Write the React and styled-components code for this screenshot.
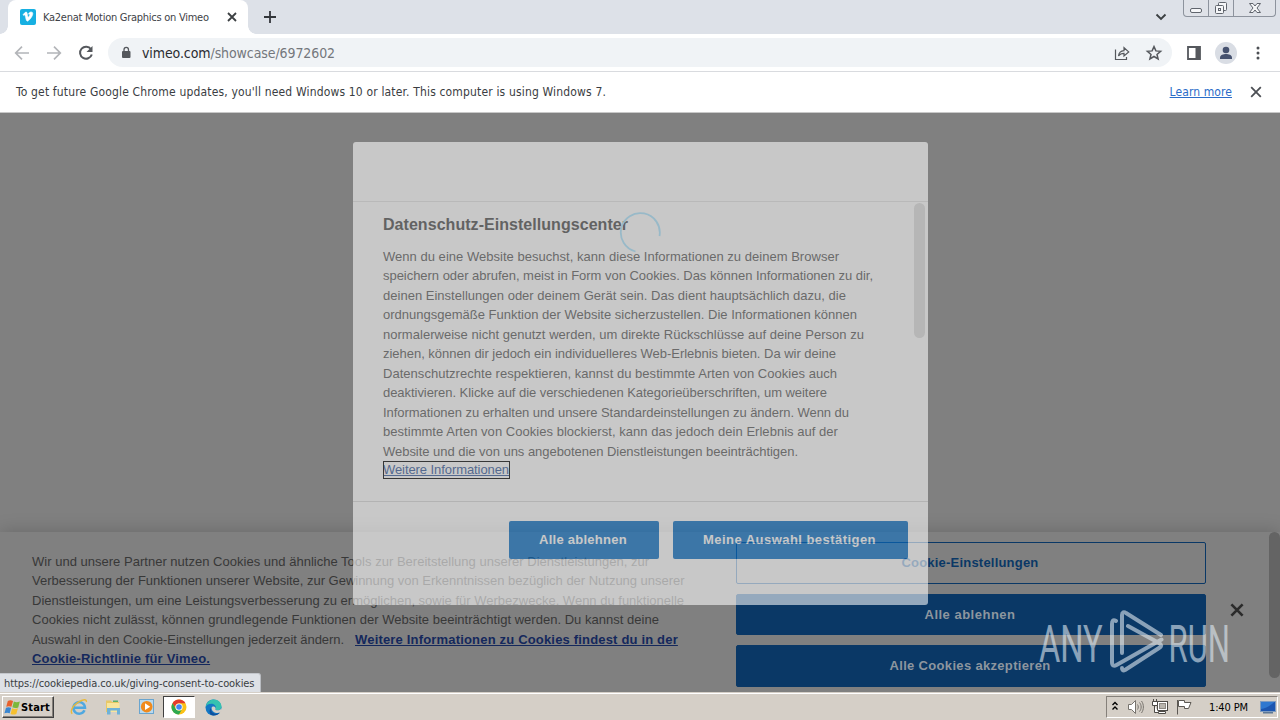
import React from 'react';
import styled, { createGlobalStyle } from 'styled-components';

const ui = '"DejaVu Sans Condensed", "DejaVu Sans", sans-serif';
const arial = '"Liberation Sans", Arial, sans-serif';

const GlobalStyle = createGlobalStyle`
  * { box-sizing: border-box; }
  body { margin: 0; overflow: hidden; background: #fff; font-family: ${ui}; }
  button { font: inherit; cursor: pointer; }
`;

const Screen = styled.div`
  position: relative;
  width: 1280px;
  height: 720px;
  display: flex;
  flex-direction: column;
  overflow: hidden;
`;

/* ---------- browser chrome ---------- */
const TabStrip = styled.header`
  height: 34px;
  flex: none;
  display: flex;
  align-items: flex-start;
  padding-left: 8px;
  background: #dde1e8;
`;

const Tab = styled.div`
  position: relative;
  width: 240px;
  height: 34px;
  display: flex;
  align-items: center;
  padding: 0 11px 0 12px;
  border-radius: 8px 8px 0 0;
  background: #fff;

  &::before,
  &::after {
    content: '';
    position: absolute;
    bottom: 0;
    width: 8px;
    height: 8px;
  }
  &::before {
    left: -8px;
    background: radial-gradient(circle at 0 0, transparent 7.5px, #fff 8px);
  }
  &::after {
    right: -8px;
    background: radial-gradient(circle at 100% 0, transparent 7.5px, #fff 8px);
  }
`;

const TabTitle = styled.span`
  flex: 1;
  margin-left: 7px;
  font-size: 11px;
  letter-spacing: -0.265px;
  white-space: nowrap;
  color: #3e4247;
`;

const NewTab = styled.div`
  margin: 9px 0 0 14px;
  height: 16px;
`;

const TabSearch = styled.div`
  margin: 9px 14px 0 auto;
  height: 16px;
`;

const WindowControls = styled.div`
  display: flex;
  height: 17px;
  width: 93px;
  margin-right: 4px;
  border: 1px solid #8d939d;
  border-top: 0;
  border-radius: 0 0 4px 4px;
  background: #dfe2e8;
`;

const WindowButton = styled.div`
  width: ${(p) => p.$w}px;
  display: flex;
  justify-content: center;
  border-right: ${(p) => (p.$last ? 0 : '1px solid #8d939d')};
`;

const Toolbar = styled.div`
  height: 38px;
  flex: none;
  display: flex;
  align-items: center;
  padding: 0 13px 0 13px;
  border-bottom: 1px solid #d9dbdf;
  background: #fff;
`;

const NavIcons = styled.div`
  display: flex;
  gap: 14px;
  width: 95px;
`;

const Omnibox = styled.div`
  width: 1064px;
  height: 29px;
  display: flex;
  align-items: center;
  padding: 0 9px 0 12px;
  border-radius: 15px;
  background: #f0f3f6;
`;

const Url = styled.span`
  flex: 1;
  margin-left: 10px;
  font-size: 14px;
  letter-spacing: -0.093px;
  color: #74777c;
  b { font-weight: 400; color: #2a2c30; }
`;

const OmniActions = styled.div`
  display: flex;
  gap: 14px;
`;

const ToolbarActions = styled.div`
  flex: 1;
  display: flex;
  align-items: center;
  justify-content: space-between;
  padding-left: 13px;
`;

const InfoBar = styled.div`
  height: 41px;
  flex: none;
  display: flex;
  align-items: center;
  padding: 0 18px 0 16px;
  border-bottom: 1px solid #c8c8c8;
  font-size: 12px;
  color: #3a3d42;
  background: #fff;
`;

const InfoText = styled.span`
  flex: 1;
  letter-spacing: 0.16px;
`;

const InfoLink = styled.a`
  margin-right: 18px;
  letter-spacing: 0.09px;
  color: #2a6cc8;
  text-decoration: underline;
`;

/* ---------- page ---------- */
const Page = styled.main`
  position: relative;
  flex: 1;
  overflow: hidden;
  background: #808080;
  font-family: ${arial};
`;

const Banner = styled.section`
  position: absolute;
  left: 0;
  right: 0;
  bottom: 0;
  height: 160px;
  display: flex;
  padding-left: 32px;
  background: #808080;
  box-shadow: 0 0 18px rgba(0, 0, 0, 0.2);
`;

const BannerText = styled.div`
  width: 704px;
  padding-top: 19.5px;
  font-size: 13px;
  line-height: 19.5px;
  color: #383838;
`;

const Line = styled.div`
  white-space: nowrap;
  letter-spacing: ${(p) => p.$s || 0}px;
`;

const PolicyLink = styled.a`
  font-weight: 700;
  letter-spacing: 0.178px;
  margin-left: ${(p) => p.$indent || 0}px;
  color: #14285c;
  text-decoration: underline;
`;

const BannerActions = styled.div`
  width: 470px;
  padding-top: 10px;
  display: flex;
  flex-direction: column;
  gap: 10px;
`;

const BannerButton = styled.button`
  height: ${(p) => p.$h || 41}px;
  padding: 0 2px 1px 0;
  border: 1px solid #0a3866;
  border-radius: 2px;
  background: ${(p) => (p.$outline ? 'transparent' : '#0a3866')};
  color: ${(p) => (p.$outline ? '#0a3866' : '#8d969f')};
  font-size: 13px;
  font-weight: 700;
  letter-spacing: ${(p) => p.$s}px;
`;

const BannerClose = styled.div`
  padding: 71px 0 0 24px;
`;

const BannerThumb = styled.div`
  margin: 0 0 14px auto;
  width: 11px;
  border-radius: 6px;
  background: #646464;
`;

const Overlay = styled.div`
  position: absolute;
  inset: 0;
  display: flex;
  justify-content: center;
  padding-top: 29px;
`;

const Modal = styled.section`
  width: 575px;
  height: 463px;
  margin-left: 1px;
  display: flex;
  flex-direction: column;
  border-radius: 3px;
  overflow: hidden;
  background: #fff;
  opacity: 0.567;
`;

const ModalHeader = styled.div`
  height: 60px;
  border-bottom: 1px solid #e4e4e4;
`;

const ModalBody = styled.div`
  height: 300px;
  display: flex;
  justify-content: space-between;
  padding: 1px 3px 0 30px;
  border-bottom: 1px solid #dadada;
`;

const ModalText = styled.div`
  font-size: 13px;
  line-height: 19.5px;
  color: #5a5a5a;
`;

const ModalTitle = styled.h2`
  margin: 10px 0 9.5px;
  font-size: 16px;
  line-height: 24px;
  letter-spacing: 0.046px;
  color: #4d4d4d;
`;

const MoreLink = styled.a`
  display: block;
  width: 127px;
  height: 18px;
  line-height: 18px;
  letter-spacing: -0.08px;
  white-space: nowrap;
  color: #33589b;
  text-decoration: underline;
  outline: 1px solid #000;
  outline-offset: -1px;
`;

const ModalThumb = styled.div`
  width: 11px;
  height: 135px;
  border-radius: 6px;
  background: #dfdfdf;
`;

const ModalFooter = styled.div`
  flex: 1;
  display: flex;
  justify-content: flex-end;
  gap: 14px;
  padding: 19px 20px 0 0;
`;

const ModalButton = styled.button`
  width: ${(p) => p.$w}px;
  height: 38px;
  padding: 0 2px 1px 0;
  border: 0;
  border-radius: 2px;
  background: #0a70c6;
  color: #fff;
  font-size: 13px;
  font-weight: 700;
  letter-spacing: ${(p) => p.$s}px;
`;

const Spinner = styled.svg`
  position: absolute;
  left: 619px;
  top: 99px;
`;

const StatusBubble = styled.div`
  position: absolute;
  left: 0;
  bottom: 0;
  width: 261px;
  height: 19px;
  padding-left: 4px;
  border-radius: 0 3px 0 0;
  background: #dee1e6;
  border-top: 1px solid #c3c6cb;
  border-right: 1px solid #b9bcc1;
  font-family: ${ui};
  font-size: 11px;
  line-height: 19px;
  letter-spacing: -0.1px;
  color: #3a3d42;
  white-space: nowrap;
`;

const Watermark = styled.svg`
  position: absolute;
  left: 1030px;
  top: 490px;
  overflow: visible;
`;

/* ---------- taskbar ---------- */
const Taskbar = styled.footer`
  height: 28px;
  flex: none;
  display: flex;
  align-items: center;
  padding: 3px 2px 2px 2px;
  background: #d5cfc7;
  border-top: 1px solid #d5cfc7;
  box-shadow: inset 0 1px 0 #fff;
`;

const StartButton = styled.button`
  width: 52px;
  height: 22px;
  display: flex;
  align-items: center;
  gap: 0;
  padding: 0 0 0 1px;
  border: 1px solid;
  border-color: #fff #404040 #404040 #fff;
  box-shadow: inset -1px -1px 0 #85807a;
  background: #d5cfc7;
  font-size: 11px;
  font-weight: 700;
  letter-spacing: 0.17px;
  color: #000;
`;

const Launchers = styled.div`
  display: flex;
  align-items: center;
  margin-left: 10px;
`;

const Launcher = styled.div`
  width: ${(p) => p.$w || 34}px;
  height: 22px;
  display: flex;
  align-items: center;
  justify-content: center;
  border: 1px solid;
  border-color: ${(p) => (p.$active ? '#404040 #fff #fff #404040' : 'transparent')};
  background: ${(p) => (p.$active ? '#fff' : 'transparent')};
`;

const Tray = styled.div`
  width: 172px;
  height: 22px;
  margin-left: auto;
  display: flex;
  align-items: center;
  padding: 0 1px 0 4px;
  border: 1px solid;
  border-color: #85807a #fff #fff #85807a;
`;

const TrayIcons = styled.div`
  display: flex;
  align-items: center;
  gap: 8px;
`;

const Clock = styled.span`
  margin: 0 12px 0 auto;
  font-size: 11px;
  letter-spacing: -0.12px;
  color: #000;
  white-space: nowrap;
`;

const Cross = ({ size = 9, color = '#3c4043', weight = 1.8 }) => (
  <svg width={size} height={size} viewBox="0 0 10 10" fill="none" stroke={color} strokeWidth={weight} display="block">
    <path d="M1 1l8 8M9 1L1 9" />
  </svg>
);

const modalLines = [
  ['Wenn du eine Website besuchst, kann diese Informationen zu deinem Browser', 0.027],
  ['speichern oder abrufen, meist in Form von Cookies. Das können Informationen zu dir,', -0.034],
  ['deinen Einstellungen oder deinem Gerät sein. Das dient hauptsächlich dazu, die', 0.015],
  ['ordnungsgemäße Funktion der Website sicherzustellen. Die Informationen können', 0.002],
  ['normalerweise nicht genutzt werden, um direkte Rückschlüsse auf deine Person zu', 0.024],
  ['ziehen, können dir jedoch ein individuelleres Web-Erlebnis bieten. Da wir deine', -0.026],
  ['Datenschutzrechte respektieren, kannst du bestimmte Arten von Cookies auch', 0.032],
  ['deaktivieren. Klicke auf die verschiedenen Kategorieüberschriften, um weitere', -0.052],
  ['Informationen zu erhalten und unsere Standardeinstellungen zu ändern. Wenn du', -0.046],
  ['bestimmte Arten von Cookies blockierst, kann das jedoch dein Erlebnis auf der', 0.034],
  ['Website und die von uns angebotenen Dienstleistungen beeinträchtigen.', -0.036],
];

const bannerLines = [
  ['Wir und unsere Partner nutzen Cookies und ähnliche Tools zur Bereitstellung unserer Dienstleistungen, zur', 0.015],
  ['Verbesserung der Funktionen unserer Website, zur Gewinnung von Erkenntnissen bezüglich der Nutzung unserer', -0.018],
  ['Dienstleistungen, um eine Leistungsverbesserung zu ermöglichen, sowie für Werbezwecke. Wenn du funktionelle', 0],
  ['Cookies nicht zulässt, können grundlegende Funktionen der Website beeinträchtigt werden. Du kannst deine', 0.02],
];

function BrowserChrome() {
  return (
    <>
      <TabStrip>
        <Tab>
          <svg width="16" height="16" viewBox="0 0 16 16">
            <rect width="16" height="16" rx="2" fill="#17b0e2" />
            <path d="M3 5.800l.6.700c.5-.3.800-.5 1-.4.600.100 1 2.600 1.400 4.100.400 1.300.800 2 1.400 2 1 0 5-4 5.400-7.300.200-1.400-.6-2.100-1.900-2-1.200.100-2.200 1-2.500 2.300 1.100-.4 1.500.100 1.200 1-.3.800-1 2-1.300 2-.4 0-.6-1.300-1-3.500C7.100 3.500 6.700 3 5.900 3.100 5 3.300 3.900 4.700 3 5.800z" fill="#fff" stroke="#fff" strokeWidth="0.500" />
          </svg>
          <TabTitle>Ka2enat Motion Graphics on Vimeo</TabTitle>
          <Cross size={10} />
        </Tab>
        <NewTab>
          <svg width="16" height="16" viewBox="0 0 16 16" fill="none" stroke="#33363b" strokeWidth="1.800">
            <path d="M8 2v12M2 8h12" />
          </svg>
        </NewTab>
        <TabSearch>
          <svg width="16" height="16" viewBox="0 0 16 16" fill="none" stroke="#3c4043" strokeWidth="1.900">
            <path d="M3.500 5.500L8 10l4.500-4.500" />
          </svg>
        </TabSearch>
        <WindowControls>
          <WindowButton $w={25}>
            <svg width="14" height="16" viewBox="0 0 14 16" fill="#f5f6f8" stroke="#60656d">
              <rect x="1.500" y="8.500" width="11" height="4" rx="1.500" />
            </svg>
          </WindowButton>
          <WindowButton $w={25}>
            <svg width="14" height="16" viewBox="0 0 14 16" fill="#f5f6f8" stroke="#60656d">
              <rect x="4.500" y="2.500" width="8" height="8" rx="1" />
              <rect x="1.500" y="5.500" width="8" height="8" rx="1" />
              <rect x="4.500" y="8.500" width="2" height="2" />
            </svg>
          </WindowButton>
          <WindowButton $w={41} $last>
            <svg width="14" height="16" viewBox="0 0 14 16" fill="#f5f6f8" stroke="#60656d">
              <path d="M1.500 3.500h3.500L7 6l2-2.500h3.500L9 8l3.500 4.500H9L7 10l-2 2.500H1.500L5 8z" />
            </svg>
          </WindowButton>
        </WindowControls>
      </TabStrip>
      <Toolbar>
        <NavIcons>
          <svg width="18" height="18" viewBox="0 0 18 18" fill="none" stroke="#b3b5b9" strokeWidth="1.700">
            <path d="M16 9H3M9 2.700L2.700 9 9 15.300" />
          </svg>
          <svg width="18" height="18" viewBox="0 0 18 18" fill="none" stroke="#b3b5b9" strokeWidth="1.700">
            <path d="M2 9h13M9 2.700L15.300 9 9 15.300" />
          </svg>
          <svg width="18" height="18" viewBox="0 0 18 18" fill="none" stroke="#55585d" strokeWidth="2">
            <path d="M14 5.300A6 6 0 1 0 14.800 10.500" />
            <path d="M15.500 2v6h-6z" fill="#55585d" stroke="none" />
          </svg>
        </NavIcons>
        <Omnibox>
          <svg width="12" height="14" viewBox="0 0 12 14">
            <rect x="2" y="5" width="8.500" height="7" rx="1" fill="#55585d" />
            <path d="M4 5.500V3.700a2.250 2.250 0 0 1 4.500 0v1.800" fill="none" stroke="#55585d" strokeWidth="1.300" />
          </svg>
          <Url><b>vimeo.com</b>/showcase/6972602</Url>
          <OmniActions>
            <svg width="18" height="18" viewBox="0 0 18 18" fill="none" stroke="#55585d" strokeWidth="1.200">
              <path d="M2.500 5.500v10h11V13" />
              <path d="M5.500 12c.400-3.500 2.500-5.200 5.500-5.400V3.700l4.700 4.200L11 12V9.300c-2.500 0-4.200.800-5.500 2.700z" />
            </svg>
            <svg width="18" height="18" viewBox="0 0 18 18" fill="none" stroke="#55585d" strokeWidth="1.500">
              <path d="M9 2.600l1.900 4.300 4.700.400-3.600 3.100 1.100 4.600L9 12.500 4.900 15l1.100-4.600-3.600-3.100 4.700-.4z" />
            </svg>
          </OmniActions>
        </Omnibox>
        <ToolbarActions>
          <svg width="18" height="18" viewBox="0 0 18 18">
            <path d="M3 3h12v12H3z" fill="none" stroke="#55585d" strokeWidth="1.800" />
            <rect x="10.500" y="3" width="4.500" height="12" fill="#55585d" />
          </svg>
          <svg width="22" height="22" viewBox="0 0 22 22">
            <circle cx="11" cy="11" r="11" fill="#d9dde4" />
            <circle cx="11" cy="8" r="3.300" fill="#46526f" />
            <path d="M5 17v-1.500c0-2.500 3.500-3.500 6-3.500s6 1 6 3.500V17z" fill="#46526f" />
          </svg>
          <svg width="18" height="18" viewBox="0 0 18 18" fill="#4c4f54">
            <circle cx="9" cy="4" r="1.500" />
            <circle cx="9" cy="9" r="1.500" />
            <circle cx="9" cy="14" r="1.500" />
          </svg>
        </ToolbarActions>
      </Toolbar>
      <InfoBar>
        <InfoText>To get future Google Chrome updates, you'll need Windows 10 or later. This computer is using Windows 7.</InfoText>
        <InfoLink>Learn more</InfoLink>
        <Cross size={12} color="#4c4f54" weight={1.500} />
      </InfoBar>
    </>
  );
}

function CookieBanner() {
  return (
    <Banner>
      <BannerText>
        {bannerLines.map(([text, s]) => <Line key={text} $s={s}>{text}</Line>)}
        <Line $s={-0.058}>
          Auswahl in den Cookie-Einstellungen jederzeit ändern.
          <PolicyLink $indent={11}>Weitere Informationen zu Cookies findest du in der</PolicyLink>
        </Line>
        <Line><PolicyLink>Cookie-Richtlinie für Vimeo.</PolicyLink></Line>
      </BannerText>
      <BannerActions>
        <BannerButton $outline $h={42} $s={0.205}>Cookie-Einstellungen</BannerButton>
        <BannerButton $s={0.498}>Alle ablehnen</BannerButton>
        <BannerButton $h={42} $s={0.326}>Alle Cookies akzeptieren</BannerButton>
      </BannerActions>
      <BannerClose><Cross size={14} color="#2b2b2b" weight={1.900} /></BannerClose>
      <BannerThumb />
    </Banner>
  );
}

function PrivacyCenter() {
  return (
    <Overlay>
      <Modal>
        <ModalHeader />
        <ModalBody>
          <ModalText>
            <ModalTitle>Datenschutz-Einstellungscenter</ModalTitle>
            {modalLines.map(([text, s]) => <Line key={text} $s={s}>{text}</Line>)}
            <MoreLink>Weitere Informationen</MoreLink>
          </ModalText>
          <ModalThumb />
        </ModalBody>
        <ModalFooter>
          <ModalButton $w={150} $s={0.267}>Alle ablehnen</ModalButton>
          <ModalButton $w={235} $s={0.456}>Meine Auswahl bestätigen</ModalButton>
        </ModalFooter>
      </Modal>
    </Overlay>
  );
}

function WindowsTaskbar() {
  return (
    <Taskbar>
      <StartButton>
        <svg width="17" height="17" viewBox="0 0 16 16">
          <path d="M3.600 1.800C5.400.7 7 1 8.500 1.900L7 7.400C5.500 6.600 3.900 6.500 2.100 7.300z" fill="#e8612c" />
          <path d="M9.300 2.300c1.800.9 3.300.9 5.600 0l-1.500 5.600c-1.800.8-3.800.7-5.500-.1z" fill="#7cb83b" />
          <path d="M1.900 8.200c1.800-.8 3.300-.6 4.800.100l-1.300 5.200C3.900 12.700 2.200 12.700.4 13.500z" fill="#3a86d0" />
          <path d="M7.600 8.800c1.700.8 3.300.8 5.500 0l-1.500 5.200c-1.800.8-3.700.8-5.400 0z" fill="#f6c02f" />
        </svg>
        Start
      </StartButton>
      <Launchers>
        <Launcher $w={30}>
          <svg width="18" height="18" viewBox="0 0 18 18" fill="none">
            <path d="M14.500 12.300A5.800 5.800 0 1 1 15 9.700H4.500" stroke="#4fa8e0" strokeWidth="2.500" />
            <path d="M2.200 15.800C-.3 13 3 7.500 8 4.300s9-3.400 8.300-.3" stroke="#e9b93a" strokeWidth="1.400" />
          </svg>
        </Launcher>
        <Launcher $w={37}>
          <svg width="18" height="18" viewBox="0 0 18 18">
            <path d="M2 2.500h5l1 1.500h7V14H2z" fill="#e8c867" />
            <path d="M3 5h12.500v9H3z" fill="#f8e59c" />
            <path d="M3 10h13v6.500h-3v-4H6.500v4H3z" fill="#6fb2d8" />
            <rect x="9" y="2.500" width="5" height="1.500" fill="#5bb06b" />
          </svg>
        </Launcher>
        <Launcher $w={32}>
          <svg width="18" height="18" viewBox="0 0 18 18">
            <rect x="1.500" y="1.500" width="14" height="14" fill="#b9d9ee" stroke="#6aa5cf" />
            <circle cx="8.700" cy="8.700" r="5.800" fill="#f08a1d" />
            <path d="M7 5.300l5.200 3.400L7 12.100z" fill="#fff" />
          </svg>
        </Launcher>
        <Launcher $w={32} $active>
          <svg width="16" height="16" viewBox="0 0 16 16">
            <circle cx="8" cy="8" r="7.500" fill="#fbc116" />
            <path d="M1.500 4.250A7.500 7.500 0 0 1 14.500 4.250H8A3.750 3.750 0 0 0 4.750 9.870z" fill="#e33b2e" />
            <path d="M1.500 4.250A7.500 7.500 0 0 0 8 15.500L11.250 9.870A3.750 3.750 0 0 1 4.750 9.870z" fill="#2da94f" />
            <circle cx="8" cy="8" r="3.600" fill="#fff" />
            <circle cx="8" cy="8" r="2.800" fill="#4285f4" />
          </svg>
        </Launcher>
        <Launcher $w={37}>
          <svg width="17" height="17" viewBox="0 0 17 17">
            <circle cx="8.500" cy="8.500" r="8" fill="#1377c4" />
            <path d="M.6 8C1.500 3 5 .5 8.700.5c4.800 0 7.800 3.600 7.800 7 0 2.500-1.800 3.800-4 3.800-1.700 0-2.700-.7-2-1.500C11.800 7.500 9.500 4.800 6.500 4.800 3.800 4.800 1.700 6 .6 8z" fill="#35c2b0" />
            <path d="M6.500 8.500c-1.500 3.500 1.500 6.500 5 6.300 1.500-.1 2.600-.6 3.600-1.200-1.500 2-3.900 3-6.600 2.900C4 16.300 3.500 11 6.500 8.500z" fill="#0d4f9e" />
            <path d="M6.600 8.500c.4-1 1.900-1.500 3.200-.6.8.7 1 1.300.7 1.900-.7.800.3 1.500 2 1.500 1.400 0 2.600-.5 3.300-1.400l1.200 2.100-2 1.500c-3.500 1.500-8.900-.5-8.400-5z" fill="#d5cfc7" />
          </svg>
        </Launcher>
      </Launchers>
      <Tray>
        <TrayIcons>
          <svg width="8" height="12" viewBox="0 0 8 12" fill="none" stroke="#000" strokeWidth="1.400">
            <path d="M1.500 4L4 1.500 6.500 4M1.500 8.500L4 6l2.500 2.500" />
          </svg>
          <svg width="17" height="16" viewBox="0 0 17 16" fill="none" stroke="#77736d" strokeWidth="1">
            <path d="M1.500 5.500h3l4-4v13l-4-4h-3z" fill="#fff" />
            <path d="M10.500 5.500c1 1.500 1 3.500 0 5M12.500 3.500c2.200 2.500 2.200 6.500 0 9M14.500 2c2.500 3.500 2.500 8.500 0 12" />
          </svg>
          <svg width="16" height="16" viewBox="0 0 16 16" fill="none" stroke="#4d4a46">
            <rect x="5.500" y="2.500" width="10" height="9" fill="#fff" />
            <rect x="7.500" y="4.500" width="6" height="5" fill="#b9b5ae" stroke="#8c8882" />
            <path d="M6.500 12.500h7v2h-7z" fill="#fff" />
            <path d="M.5 2.500h5v4h-5zM2.500 6.500v7h4" fill="#fff" />
            <path d="M1.500 0v2M4.500 0v2" />
          </svg>
          <svg width="16" height="16" viewBox="0 0 16 16" fill="#fff" stroke="#5c5853">
            <path d="M1.500 1v14.500" />
            <path d="M2.500 1.500h6v2h6.500l-2.500 6h-4v-2h-6z" />
          </svg>
        </TrayIcons>
        <Clock>1:40 PM</Clock>
        <svg width="16" height="14" viewBox="0 0 16 14">
          <rect x="0.500" y="1.500" width="15" height="10" fill="#1c56b0" stroke="#7f9cc0" />
          <path d="M1 9C5 8.500 10 6 14.500 2H1z" fill="#2f78d0" />
          <rect x="3" y="12" width="10" height="1.500" fill="#5d7896" />
        </svg>
      </Tray>
    </Taskbar>
  );
}

export default function App() {
  return (
    <Screen>
      <GlobalStyle />
      <BrowserChrome />
      <Page>
        <CookieBanner />
        <PrivacyCenter />
        <Spinner width="42" height="42" viewBox="0 0 42 42" fill="none" stroke="#98b9c8" strokeWidth="1.800">
          <path d="M40.500 24A19.500 19.500 0 1 0 16.500 39.500" />
        </Spinner>
        <Watermark width="240" height="80" viewBox="0 0 240 80">
          <g opacity="0.6" fill="#dfe9f1" stroke="none" fontFamily="Roboto, sans-serif" fontSize="51">
            <text transform="translate(9 58.500) scale(0.640 1)">ANY</text>
            <text transform="translate(138.500 58.500) scale(0.610 1)">RUN</text>
          </g>
          <g opacity="0.6" fill="none" stroke="#dfe9f1" strokeWidth="4" strokeLinejoin="round" strokeLinecap="round">
            <path d="M86 18c-3-2-4 0-4 3v38c0 4 2 4.500 4.500 3l45-25.500" />
            <path d="M92 50V12c0-3 2-3.500 4-2l35 22" />
            <path d="M98 23l31 17c3 2 3 3 0 5L95 67c-2 1-3 0-3-2" />
          </g>
        </Watermark>
        <StatusBubble>https://cookiepedia.co.uk/giving-consent-to-cookies</StatusBubble>
      </Page>
      <WindowsTaskbar />
    </Screen>
  );
}
